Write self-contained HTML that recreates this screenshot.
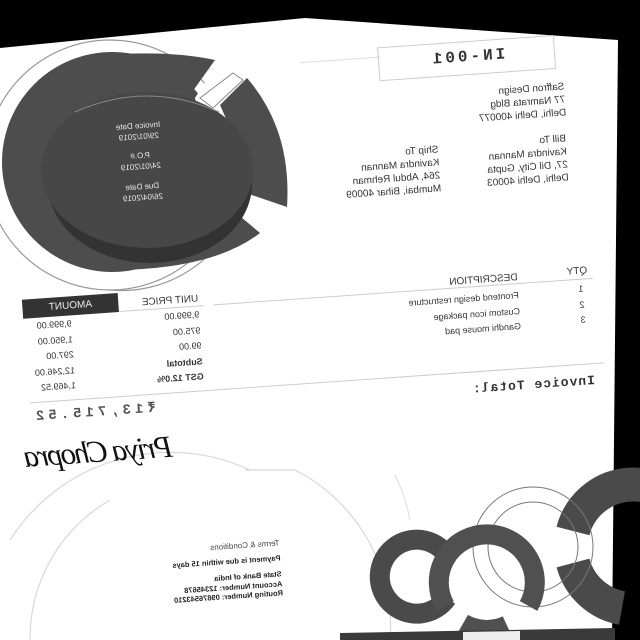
<!DOCTYPE html>
<html><head><meta charset="utf-8">
<style>
html,body{margin:0;padding:0;background:#000;}
#wrap{position:relative;width:640px;height:640px;overflow:hidden;background:#000;}
svg.bg{position:absolute;left:0;top:0;}
#t{position:absolute;left:0;top:0;width:640px;height:640px;transform-origin:320px 320px;transform:scaleX(-1) rotate(4deg);font-family:"Liberation Sans",sans-serif;color:#333;}
#t div{position:absolute;white-space:nowrap;}
.s{font-size:10px;line-height:13px;color:#333;}
.c{color:#e6e6e6;font-size:8px;line-height:11px;text-align:center;width:120px;}
.mono{font-family:"Liberation Mono",monospace;font-weight:bold;}
.r{font-size:9px;color:#333;}
</style></head><body>
<div id="wrap">
<svg class="bg" width="640" height="640" viewBox="0 0 640 640">
  <polygon points="0,48 305,18 618,40 612,640 0,640" fill="#fff"/>
  <line x1="200" y1="70" x2="380" y2="57" stroke="#ddd" stroke-width="1"/>
  <!-- big circle top-left -->
  <circle cx="110" cy="165" r="125" fill="none" stroke="#999" stroke-width="1.2"/>
  <circle cx="112" cy="162" r="110" fill="#4d4d4d"/>
  <path d="M 100 55 Q 170 50 215 60 L 190 95 L 110 100 Z" fill="#4d4d4d"/>
  <path d="M 195 98 L 218 62 L 300 55 L 300 230 L 222 215 Z" fill="#fff"/>
  <polygon points="200,98 233,73 243,80 213,108" fill="#fff" stroke="#888" stroke-width="1"/>
  <path d="M 110 290 A 125 125 0 0 0 240 205" fill="none" stroke="#999" stroke-width="1.2"/>
  <path d="M 220 105 L 247 78 Q 292 130 287 207 L 243 192 L 240 150 Z" fill="#4d4d4d"/>
  <path d="M 120 270 Q 215 268 260 233 L 235 212 Q 200 245 140 250 Z" fill="#4d4d4d"/>
  <ellipse cx="150" cy="184" rx="102" ry="79" fill="#333"/>
  <ellipse cx="147" cy="170" rx="106" ry="78" fill="#474747"/>
  <path d="M 75 112 Q 147 80 219 112" fill="none" stroke="#888" stroke-width="1"/>
  <!-- bottom-left light outlines -->
  <path d="M 10 540 A 190 190 0 0 1 250 470" fill="none" stroke="#d8d8d8" stroke-width="1.2"/>
  <path d="M 30 640 A 160 160 0 0 1 110 500" fill="none" stroke="#d8d8d8" stroke-width="1.2"/>
  <path d="M 295 470 A 175 175 0 0 1 390 640" fill="none" stroke="#d8d8d8" stroke-width="1.2"/>
  <path d="M 245 470 L 295 470" fill="none" stroke="#d8d8d8" stroke-width="1.2"/>
  <path d="M 395 475 A 170 170 0 0 1 410 520" fill="none" stroke="#ddd" stroke-width="1"/>
  <!-- right rings -->
  <path d="M 573 531 A 62 62 0 0 1 687 516" fill="none" stroke="#4a4a4a" stroke-width="34"/>
  <path d="M 573 563 A 62 62 0 0 0 622 608" fill="none" stroke="#4a4a4a" stroke-width="34"/>
  <circle cx="533" cy="547" r="60" fill="none" stroke="#777" stroke-width="1"/>
  <circle cx="533" cy="547" r="45" fill="none" stroke="#777" stroke-width="1"/>
  <path d="M 449 558.5 A 37 37 0 1 0 447 598" fill="none" stroke="#4a4a4a" stroke-width="20"/>
  <path d="M 445 606 A 48 48 0 1 1 528.6 606" fill="none" stroke="#505050" stroke-width="20"/>
  <path d="M 507 625.5 A 48 48 0 0 1 463 623.6" fill="none" stroke="#505050" stroke-width="20"/>
  <polygon points="340,633 615,628 615,640 340,640" fill="#3a3a3a"/>
  <polygon points="463,632 520,631 520,640 463,640" fill="#eee"/>
</svg>
<div id="t">
  <div style="left:67px;top:52px;width:175px;height:32px;border:1px solid #ccc;"></div>
  <div class="mono" style="left:67px;top:59px;width:175px;text-align:center;font-size:16px;letter-spacing:3px;color:#333;">IN-001</div>

  <div class="s" style="left:60px;top:98px;">Saffron Design<br>77 Namrata Bldg<br>Delhi, Delhi 400077</div>
  <div class="s" style="left:62px;top:150px;">Bill To<br>Kavindra Mannan<br>27, Dil City, Gupta<br>Delhi, Delhi 40003</div>
  <div class="s" style="left:190px;top:152px;">Ship To<br>Kavindra Mannan<br>264, Abdul Rehman<br>Mumbai, Bihar 40009</div>

  <div class="c" style="left:428px;top:108px;">Invoice Date<br>29/01/2019</div>
  <div class="c" style="left:428px;top:138px;">P.O.#<br>24/01/2019</div>
  <div class="c" style="left:428px;top:169px;">Due Date<br>26/04/2019</div>

  <div class="s" style="left:50px;top:283px;">QTY</div>
  <div class="s" style="left:120px;top:285px;">DESCRIPTION</div>
  <div class="s" style="left:440px;top:284px;">UNIT PRICE</div>
  <div style="left:520px;top:279px;width:96px;height:19px;background:#333;color:#eee;font-size:10px;line-height:19px;text-align:center;">AMOUNT</div>
  <div style="left:45px;top:297px;width:380px;height:1px;background:#ccc;"></div>
  <div style="left:435px;top:297px;width:85px;height:1px;background:#ccc;"></div>

  <div class="r" style="left:55px;top:300px;line-height:15.5px;">1<br>2<br>3</div>
  <div class="r" style="left:120px;top:302px;line-height:15.5px;">Frontend design restructure<br>Custom icon package<br>Gandhi mouse pad</div>
  <div class="r" style="left:440px;top:299px;line-height:15.5px;">9,999.00<br>975.00<br>99.00<br><b>Subtotal</b><br><b>GST 12.0%</b></div>
  <div class="r" style="left:568px;top:299px;line-height:15.5px;">9,999.00<br>1,950.00<br>297.00<br>12,246.00<br>1,469.52</div>

  <div style="left:40px;top:382px;width:575px;height:1px;background:#ccc;"></div>
  <div class="mono" style="left:50px;top:392px;font-size:13px;letter-spacing:1px;color:#333;">Invoice Total:</div>
  <div class="mono" style="left:490px;top:388px;font-size:14px;letter-spacing:4px;color:#555;">₹13,715.52</div>

  <div style="left:476px;top:418px;font-family:'Liberation Serif',serif;font-style:italic;font-size:31px;color:#111;letter-spacing:-2px;">Priya Chopra</div>

  <div style="left:376px;top:534px;font-size:8px;line-height:11px;color:#444;">Terms &amp; Conditions</div>
  <div style="left:376px;top:550px;font-size:7.5px;color:#222;font-weight:bold;">Payment is due within 15 days</div>
  <div style="left:376px;top:566px;font-size:7.5px;line-height:9.5px;color:#222;font-weight:bold;">State Bank of India<br>Account Number: 12345678<br>Routing Number: 09876543210</div>
</div>
</div>
</body></html>
